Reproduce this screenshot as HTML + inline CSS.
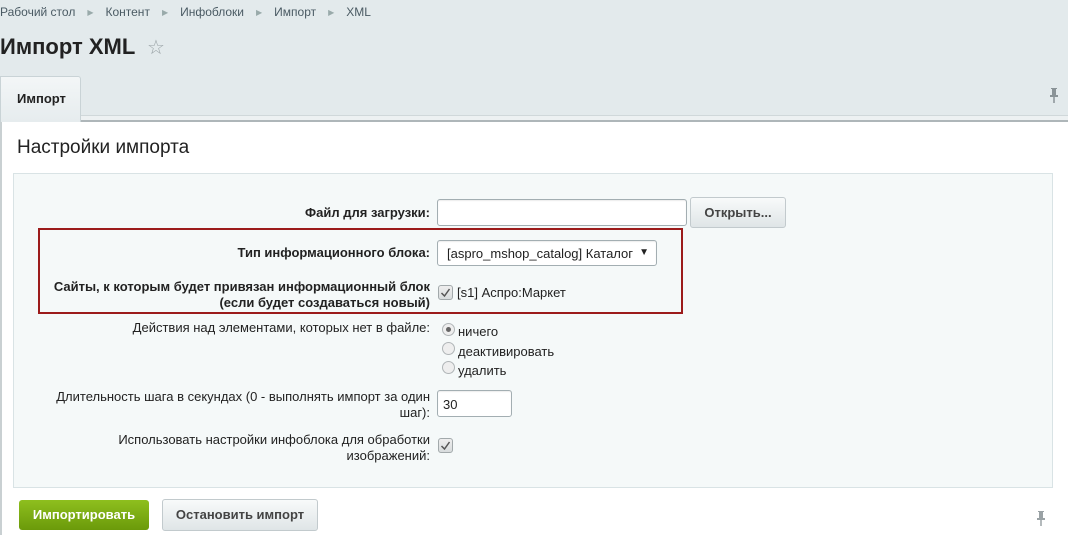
<!DOCTYPE html>
<html><head><meta charset="utf-8"><style>
*{margin:0;padding:0;box-sizing:border-box}
body{width:1068px;height:535px;overflow:hidden;background:#e3eaec;font-family:"Liberation Sans",Arial,sans-serif;position:relative;color:#000}
.a{position:absolute}
.bc{top:5px;left:0;font-size:12px;color:#4a5a63}
.bc span{margin-right:12px}.bc i{font-style:normal;color:#9aa;font-size:8px;margin-right:12px;position:relative;top:-1px}
h1{position:absolute;top:34px;left:0;font-size:22px;font-weight:bold;color:#222}
.tab{left:0;top:76px;width:81px;height:46px;background:linear-gradient(#f3f6f7,#e6ecee);border:1px solid #c9d3d6;border-bottom:none;border-radius:0 3px 0 0;font-size:13px;font-weight:bold;color:#222;padding:14px 0 0 16px;z-index:2}
.line{left:0;top:115px;width:1068px;height:7px;background:#edf1f2;border-bottom:2px solid #aeb6b9;border-top:1px solid #d0d8da}
.panel{left:0;top:122px;width:1068px;height:413px;background:#fff;border-left:2px solid #c9d0d2}
.ttl{left:17px;top:137px;font-size:19px;color:#222}
.box{left:13px;top:173px;width:1040px;height:315px;background:#f5f9f9;border:1px solid #d9e3e5}
.lbl{font-size:13px;text-align:right;color:#222;width:420px;left:10px;line-height:16px}
.b{font-weight:bold}
.inp{background:#fff;border:1px solid #a3aeb2;border-radius:3px;box-shadow:inset 0 1px 1px rgba(0,0,0,.08)}
.btn{background:linear-gradient(#f8fafa,#dfe5e7);border:1px solid #c2cacd;border-radius:3px;font-size:13px;font-weight:bold;color:#444;text-align:center}
.red{left:38px;top:228px;width:645px;height:86px;border:2px solid #9c1b1b}
.cb{width:15px;height:15px;border:1px solid #a2a9ab;border-radius:3px;background:linear-gradient(#eee,#d8dcdd)}
.rd{width:13px;height:13px;border:1px solid #b0b5b7;border-radius:50%;background:#eee}
.t{font-size:13px;color:#222}
</style></head><body>
<div class="a bc"><span>Рабочий стол</span><i>▶</i><span>Контент</span><i>▶</i><span>Инфоблоки</span><i>▶</i><span>Импорт</span><i>▶</i><span>XML</span></div>
<h1>Импорт XML <span style="color:#9aa3a6;font-weight:normal;font-size:20px;margin-left:6px">☆</span></h1>
<div class="a line"></div>
<div class="a tab">Импорт</div>
<svg class="a" style="left:1048px;top:87px" width="12" height="17" viewBox="0 0 12 17"><path d="M3 1h6v1H8v6h2v2H2V8h2V2H3z" fill="#8a9397"/><path d="M6 9v7" stroke="#8a9397" stroke-width="1.5"/></svg>
<div class="a panel"></div>
<div class="a ttl">Настройки импорта</div>
<div class="a box"></div>
<div class="a lbl b" style="top:205px">Файл для загрузки:</div>
<div class="a inp" style="left:437px;top:199px;width:250px;height:27px"></div>
<div class="a btn" style="left:690px;top:197px;width:96px;height:31px;line-height:29px">Открыть...</div>
<div class="a red"></div>
<div class="a lbl b" style="top:245px">Тип информационного блока:</div>
<div class="a inp" style="left:437px;top:240px;width:220px;height:26px;font-size:13px;padding:5px 9px;color:#222">[aspro_mshop_catalog] Каталог<span style="position:absolute;right:7px;top:6px;font-size:10px">▼</span></div>
<div class="a lbl b" style="top:279px">Сайты, к которым будет привязан информационный блок<br>(если будет создаваться новый)</div>
<div class="a cb" style="left:438px;top:285px"></div><svg class="a" style="left:440px;top:287px" width="11" height="11"><path d="M1.5 6l3 3 5-7" stroke="#555" stroke-width="1.5" fill="none"/></svg>
<div class="a t" style="left:457px;top:285px">[s1] Аспро:Маркет</div>
<div class="a lbl" style="top:320px">Действия над элементами, которых нет в файле:</div>
<div class="a rd" style="left:442px;top:323px"></div><div class="a" style="left:446px;top:327px;width:5px;height:5px;border-radius:50%;background:#666"></div>
<div class="a t" style="left:458px;top:324px">ничего</div>
<div class="a rd" style="left:442px;top:342px"></div><div class="a t" style="left:458px;top:344px">деактивировать</div>
<div class="a rd" style="left:442px;top:361px"></div><div class="a t" style="left:458px;top:363px">удалить</div>
<div class="a lbl" style="top:389px">Длительность шага в секундах (0 - выполнять импорт за один<br>шаг):</div>
<div class="a inp t" style="left:437px;top:390px;width:75px;height:27px;padding:6px 5px">30</div>
<div class="a lbl" style="top:432px">Использовать настройки инфоблока для обработки<br>изображений:</div>
<div class="a cb" style="left:438px;top:438px"></div><svg class="a" style="left:440px;top:440px" width="11" height="11"><path d="M1.5 6l3 3 5-7" stroke="#555" stroke-width="1.5" fill="none"/></svg>
<div class="a" style="left:19px;top:500px;width:130px;height:30px;background:linear-gradient(#8ebf1e,#6b9a0a);border-radius:3px;color:#fff;font-weight:bold;font-size:13px;text-align:center;line-height:30px">Импортировать</div>
<div class="a btn" style="left:162px;top:499px;width:156px;height:32px;line-height:30px">Остановить импорт</div>
<svg class="a" style="left:1035px;top:510px" width="12" height="17" viewBox="0 0 12 17"><path d="M3 1h6v1H8v6h2v2H2V8h2V2H3z" fill="#9aa2a5"/><path d="M6 9v7" stroke="#9aa2a5" stroke-width="1.5"/></svg>
</body></html>
